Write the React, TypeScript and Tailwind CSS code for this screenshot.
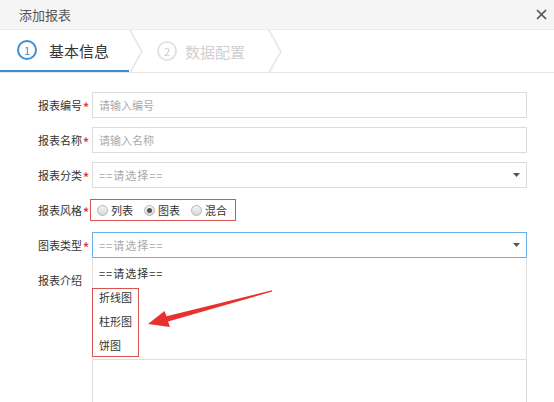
import React from "react";

const font = { fontFamily: '"Noto Sans CJK SC", "Noto Sans", sans-serif' };

function Label({ text, required }: { text: string; required?: boolean }) {
  return (
    <div className="flex w-[92px] shrink-0 items-center justify-end pr-[1px]">
      <span className="text-[11px] leading-none text-[#333]">{text}</span>
      <span className="relative top-[2px] w-[9px] pl-[1px] text-[12px] font-bold leading-none text-[#e4393c]">{required ? "*" : ""}</span>
    </div>
  );
}

function Caret() {
  return (
    <svg width="7" height="4" viewBox="0 0 7 4" className="mr-[6px]">
      <path d="M0 0 L7 0 L3.5 4 Z" fill="#555" />
    </svg>
  );
}

function Radio({ checked, label }: { checked?: boolean; label: string }) {
  return (
    <div className="flex items-center">
      <span className="flex h-[11px] w-[11px] items-center justify-center rounded-full border border-[#b5b5b5] bg-gradient-to-b from-[#f4f4f4] to-[#d8d8d8]">
        {checked && <span className="h-[5px] w-[5px] rounded-full bg-[#555]" />}
      </span>
      <span className="ml-[3px] text-[11px] leading-none text-[#333]">{label}</span>
    </div>
  );
}

export default function App() {
  return (
    <div className="relative h-[402px] w-[554px] overflow-hidden bg-white" style={font}>
      {/* Title bar */}
      <div className="flex h-[30px] items-center justify-between border-b border-[#ececec] bg-[#f5f5f5] pl-[19px] pr-[7px]">
        <span className="text-[13px] text-[#555]">添加报表</span>
        <svg width="11" height="11" viewBox="0 0 11 11">
          <path d="M1 1 L10 10 M10 1 L1 10" stroke="#555" strokeWidth="1.7" />
        </svg>
      </div>

      {/* Steps */}
      <div className="relative flex h-[43px] items-stretch border-b border-[#e6e6e6]">
        <div className="relative flex w-[129px] items-center border-b-2 border-[#3d8fd1] pl-[17px]">
          <span className="flex h-[20px] w-[20px] items-center justify-center rounded-full border-2 border-[#3d8fd1] text-[11px] leading-none text-[#3d8fd1]">1</span>
          <span className="ml-[12px] text-[15px] leading-none text-[#333]">基本信息</span>
        </div>
        <svg width="14" height="43" viewBox="0 0 14 43" className="shrink-0">
          <path d="M1 0 L13 21.5 L1 43" fill="none" stroke="#e2e2e2" strokeWidth="1.2" />
          <path d="M0 0 L12 21.5 L0 43" fill="none" stroke="#f0f0f0" strokeWidth="1" />
        </svg>
        <div className="flex w-[125px] items-center pl-[14px]">
          <span className="flex h-[20px] w-[20px] items-center justify-center rounded-full border-2 border-[#e3e3e3] text-[11px] leading-none text-[#d0d0d0]">2</span>
          <span className="ml-[8px] text-[15px] leading-none text-[#d0d0d0]">数据配置</span>
        </div>
        <svg width="14" height="43" viewBox="0 0 14 43" className="shrink-0">
          <path d="M1 0 L13 21.5 L1 43" fill="none" stroke="#e2e2e2" strokeWidth="1.2" />
          <path d="M0 0 L12 21.5 L0 43" fill="none" stroke="#f0f0f0" strokeWidth="1" />
        </svg>
      </div>

      {/* Form */}
      <div className="flex flex-col gap-[9px] pt-[19px]">
        <div className="flex h-[26px]">
          <Label text="报表编号" required />
          <div className="flex h-[26px] w-[435px] items-center border border-[#dcdcdc] pl-[6px] text-[11px] text-[#aaa]">请输入编号</div>
        </div>
        <div className="flex h-[26px]">
          <Label text="报表名称" required />
          <div className="flex h-[26px] w-[435px] items-center border border-[#dcdcdc] pl-[6px] text-[11px] text-[#aaa]">请输入名称</div>
        </div>
        <div className="flex h-[26px]">
          <Label text="报表分类" required />
          <div className="flex h-[26px] w-[435px] items-center justify-between border border-[#dcdcdc] pl-[6px] text-[11px] tracking-[1px] text-[#aaa]">
            <span>==请选择==</span>
            <Caret />
          </div>
        </div>
        <div className="flex h-[26px] items-center">
          <Label text="报表风格" required />
          <div className="-ml-[2px] flex h-[22px] w-[146px] items-center gap-[11px] border border-[#d9534f] pl-[6px]">
            <Radio label="列表" />
            <Radio label="图表" checked />
            <Radio label="混合" />
          </div>
        </div>
        <div className="relative flex h-[26px]">
          <Label text="图表类型" required />
          <div className="flex h-[26px] w-[435px] items-center justify-between border border-[#66afe9] pl-[6px] text-[11px] tracking-[1px] text-[#aaa]">
            <span>==请选择==</span>
            <Caret />
          </div>
        </div>
        <div className="flex">
          <div className="w-[92px] shrink-0 pt-[8px]">
            <div className="flex justify-end pr-[1px]">
              <span className="text-[11px] leading-none text-[#333]">报表介绍</span>
              <span className="w-[9px]" />
            </div>
          </div>
          <div className="h-[200px] w-[435px] border border-[#dcdcdc]" />
        </div>
      </div>

      {/* Dropdown overlay */}
      <div className="absolute left-[92px] top-[259px] w-[435px] border-x border-b border-[#e0e0e0] bg-white pb-[2px] pt-[2px]">
        <div className="flex h-[24px] items-center pl-[6px] text-[11px] tracking-[1px] text-[#333]">==请选择==</div>
        <div className="flex h-[24px] items-center pl-[6px] text-[11px] text-[#333]">折线图</div>
        <div className="flex h-[24px] items-center pl-[6px] text-[11px] text-[#333]">柱形图</div>
        <div className="flex h-[24px] items-center pl-[6px] text-[11px] text-[#333]">饼图</div>
      </div>
      <div className="absolute left-[92px] top-[288px] h-[69px] w-[47px] border border-[#d9534f]" />

      {/* Red arrow annotation */}
      <svg className="pointer-events-none absolute left-0 top-0" width="554" height="402" viewBox="0 0 554 402">
        <polygon
          points="148,324 164.5,311 166.5,316.3 272,290.3 272.2,291.6 168,321.5 170,327 148,324"
          fill="#e8312f"
        />
      </svg>
    </div>
  );
}
